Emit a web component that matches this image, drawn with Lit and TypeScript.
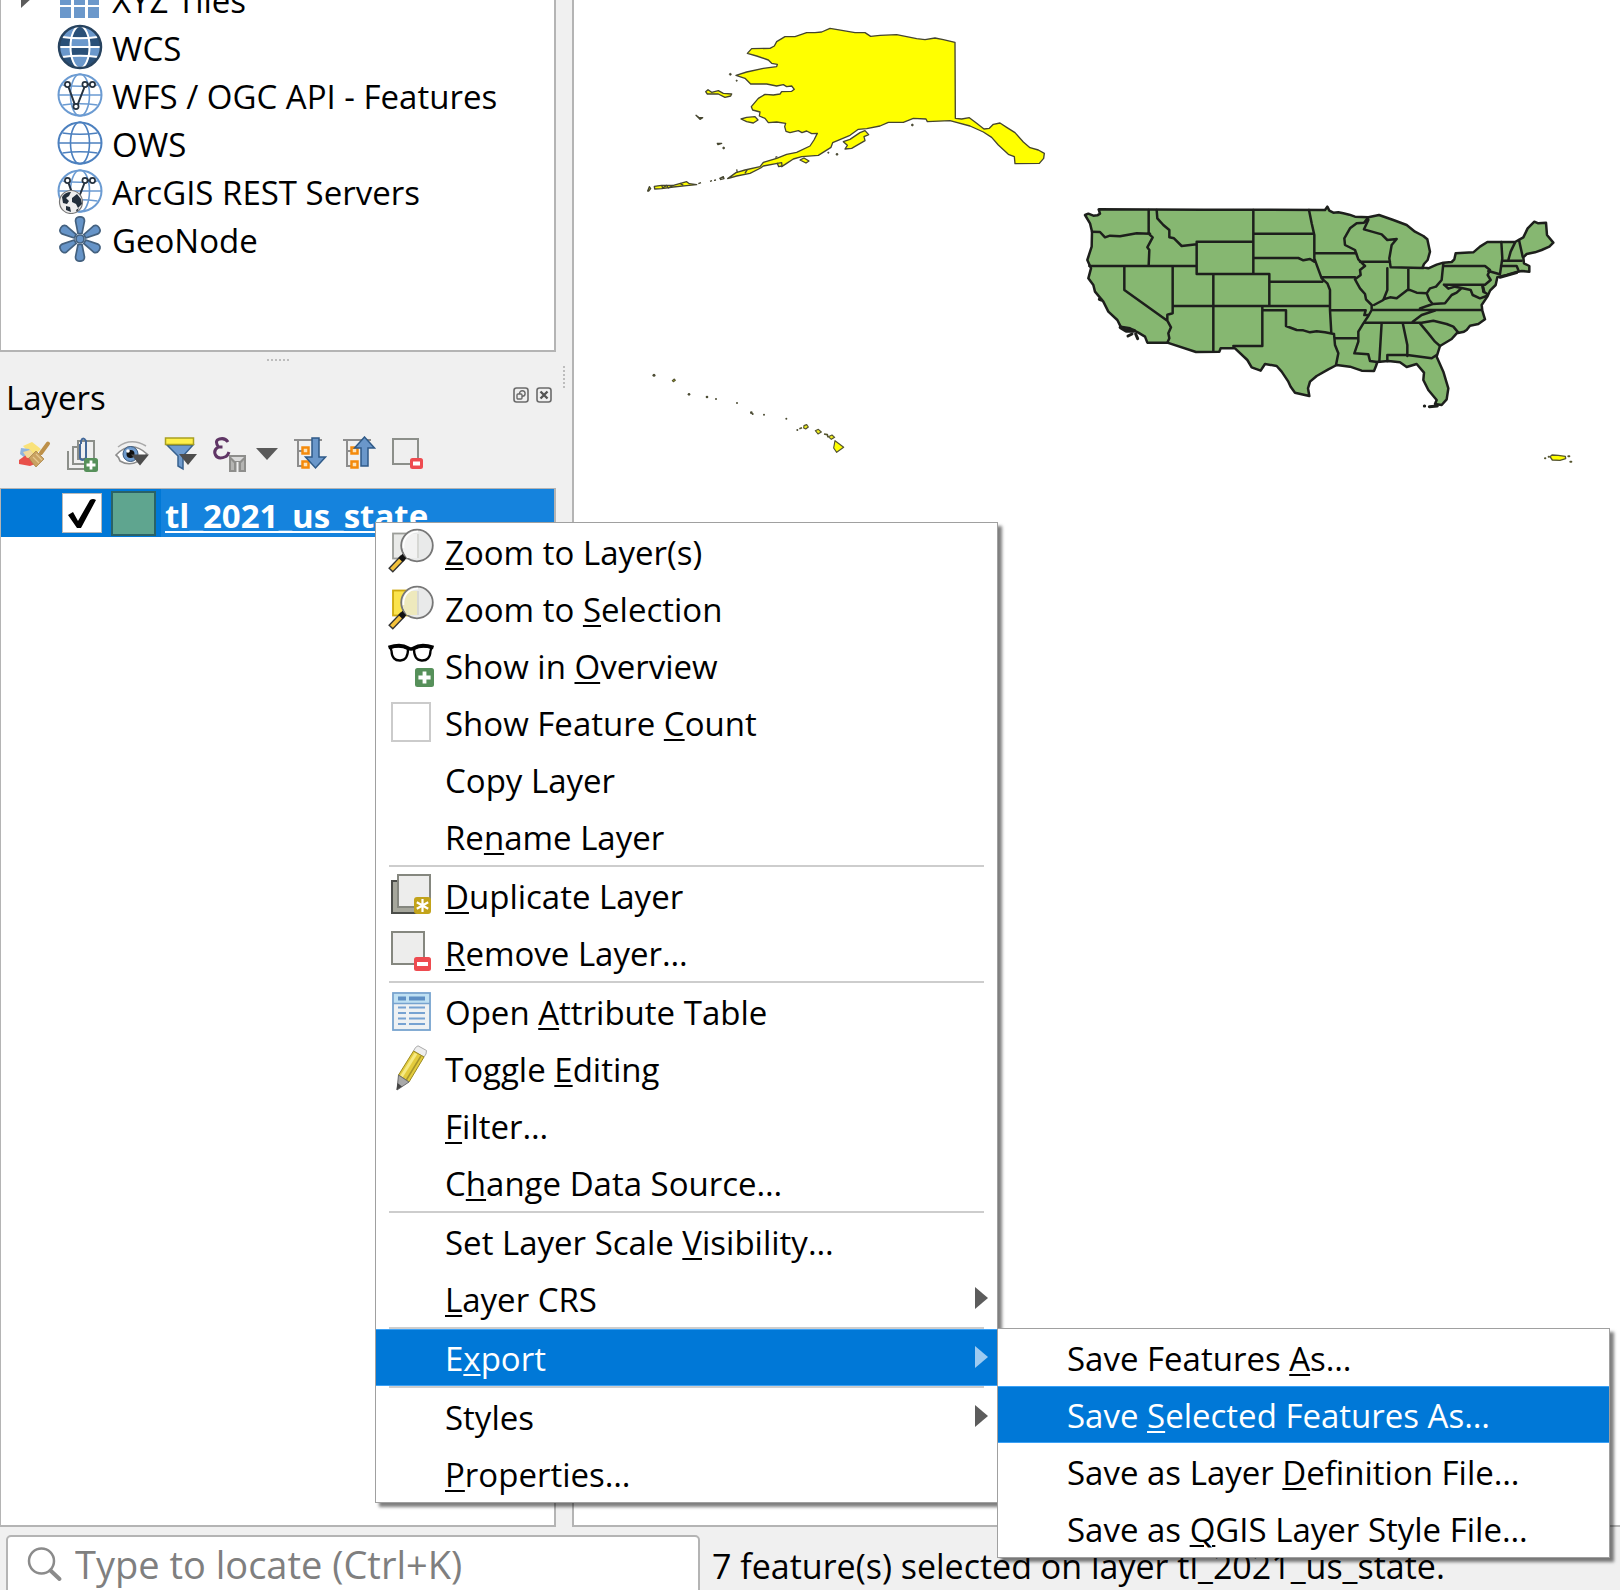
import { LitElement, html, svg, css, nothing } from "lit";
import { customElement, state } from "lit/decorators.js";

/* ---------- icons ---------- */

const globeLines = (stroke: string, w = 1.6) => svg`
  <g fill="none" stroke=${stroke} stroke-width=${w}>
    <ellipse cx="23" cy="23" rx="9.5" ry="21"/>
    <path d="M2 23H44M5.500 13Q23 15.500 40.500 13M5.500 33Q23 30.500 40.500 33"/>
  </g>`;

const nodeV = svg`
  <g fill="none" stroke="#26323f" stroke-width="2"><path d="M11.500 15L18 33M20.500 33L27.500 15M30 12.500H33"/></g>
  <g fill="#fff" stroke="#26323f" stroke-width="1.700">
    <circle cx="10.500" cy="12.500" r="2.600"/><circle cx="28" cy="12.500" r="2.600"/>
    <circle cx="35.500" cy="12.500" r="2.600"/><circle cx="19" cy="34.500" r="2.600"/>
  </g>`;

const xyzIcon = html`<svg class="tree-icon" viewBox="0 0 46 46" aria-hidden="true">
  <g fill="#6b98cb">${[3, 17, 31].map(x => [4, 18, 31].map(y => svg`<rect x=${x} y=${y} width="11" height="11"/>`))}</g></svg>`;

const wcsIcon = html`<svg class="tree-icon" viewBox="0 0 46 46" aria-hidden="true">
  <defs>
    <clipPath id="disc"><circle cx="23" cy="23" r="21"/></clipPath>
    <clipPath id="core"><ellipse cx="23" cy="23" rx="9.500" ry="21"/></clipPath>
  </defs>
  <g clip-path="url(#disc)">
    <rect width="46" height="46" fill="#6b98cb"/>
    <path fill="#2a5078" d="M0 14H46V23H0zM0 33H46V46H0z"/>
    <g clip-path="url(#core)"><rect width="46" height="46" fill="#6b98cb"/><path fill="#2a5078" d="M0 0H46V13H0zM0 24H46V32H0z"/></g>
  </g>
  ${globeLines("#fff", 2)}
  <circle cx="23" cy="23" r="21" fill="none" stroke="#27435f" stroke-width="2.500"/></svg>`;

const globe = (stroke: string, extra: unknown = nothing) => html`<svg class="tree-icon" viewBox="0 0 46 46" aria-hidden="true">
  <ellipse cx="23" cy="23" rx="21.500" ry="20.500" fill="#fff" stroke=${stroke} stroke-width="2"/>
  ${globeLines(stroke)}${extra}</svg>`;

const wfsIcon = globe("#6b9bd2", nodeV);
const owsIcon = globe("#4c80bf");
const arcIcon = globe("#6b9bd2", svg`${nodeV}
  <circle cx="14" cy="34" r="11.500" fill="#eee" stroke="#777" stroke-width="1.200"/>
  <path fill="#222e3b" d="M5 29Q8 24 14 24L12 28L9 30L12 33L10 36L6 35zM15 30L20 26L24 31L25 36L21 40L19 36L15 34zM9 38L13 39L14 44L9 42zM19 42L22 40L20 44z"/>`);

const geonodeIcon = html`<svg class="tree-icon" viewBox="0 0 46 46" aria-hidden="true">
  <g fill="#6694c8" stroke="#44617f" stroke-width="1.700">
    ${[0, 60, 120, 180, 240, 300].map(a => svg`<path transform=${`rotate(${a} 23 23)`} d="M21 17.500L18.500 5Q18.500 .8 23 .8T27.500 5L25 17.500z"/>`)}
    <circle cx="23" cy="23" r="4"/>
  </g></svg>`;

const tool = (body: unknown) => html`<svg class="tool-icon" viewBox="0 0 34 36" aria-hidden="true">${body}</svg>`;

const plusBadge = (x: number, y: number, s: number) => svg`
  <rect x=${x} y=${y} width=${s} height=${s} rx="2.500" fill="#56905a"/>
  <path stroke="#fff" stroke-width=${s / 5} d=${`M${x + s / 2} ${y + s * .18}V${y + s * .82}M${x + s * .18} ${y + s / 2}H${x + s * .82}`}/>`;
const minusBadge = (x: number, y: number, w: number, h: number) => svg`
  <rect x=${x} y=${y} width=${w} height=${h} rx="2.500" fill="#ee4b50"/>
  <rect x=${x + 3} y=${y + h / 2 - 2} width=${w - 6} height="4" fill="#fff"/>`;

const brushIcon = tool(svg`
  <path fill="#f9e27a" d="M6 10L15 6L24 13L16 21z"/><path fill="#8fb4de" d="M4 12L12 13L17 19L8 22L3 18z"/>
  <path fill="#e8504a" d="M2 24L9 19L18 28L13 30L2 28z"/>
  <path fill="#f2d89a" d="M6 16L13 14L18 20L10 22z"/>
  <path fill="#c9a262" stroke="#a98549" stroke-width=".8" d="M12 22L19 15L27 23L19 31Q15 27 12 22z"/>
  <path fill="none" stroke="#e6c88e" stroke-width="1.200" d="M16 21L22 27M19 18L25 24"/>
  <path stroke="#bd9049" stroke-width="4" stroke-linecap="round" d="M24 17L31 7.500"/>`);

const addGroupIcon = tool(svg`
  <g fill="#efefef" stroke="#8c8f8a" stroke-width="2">
    <path d="M2 15V33H18" fill="none"/><path d="M7 28V11H25V28z"/><path d="M12 23V5H28V23z"/>
  </g>
  <path fill="none" stroke="#44699a" stroke-width="2" d="M14 8V22Q16 26 20 22V5Q17 0 15 5V8"/>
  ${plusBadge(18, 22, 14)}`);

const eyeIcon = tool(svg`
  <path fill="#fff" stroke="#8d8d8d" stroke-width="1.600" d="M1 19Q16 3 32 18Q18 33 5 25Q4 21 1 19z"/>
  <path fill="none" stroke="#a9a9a9" stroke-width="1.500" d="M3 11Q16 1 31 10"/>
  <circle cx="15.500" cy="18" r="7.500" fill="#6f9bce" stroke="#3a5a7e"/><circle cx="15.500" cy="18" r="4" fill="#111"/>
  <circle cx="13" cy="15" r="1.800" fill="#fff"/>
  <path fill="#4d4d4d" d="M16 18.500H34L25 29.500z"/>`);

const filterIcon = tool(svg`
  <path fill="#6f9bce" stroke="#37618f" stroke-width="1.500" d="M3 9H29L19 20V33L14 30V20z"/>
  <rect x="1.500" y="2" width="28" height="6.500" fill="#fff04a" stroke="#a9a020" stroke-width="1.500"/>
  <path fill="#4d4d4d" d="M15 18H33L24 29z"/>`);

const exprIcon = tool(svg`
  <path fill="none" stroke="#5f3565" stroke-width="3" d="M15 6Q12 1.500 6.500 3T5.500 11H9.500H5.500Q0 14 2.500 19T13 20.500Q15 19 16 16"/>
  <path fill="#8e8e8c" d="M16 19H33V36H25.500V26H23.500V36H16z"/>
  <path fill="#d9d9d9" d="M18 21H31L27 25H22z"/><path fill="#b5b5b3" d="M18 24L21 27V34H18zM31 24L28 27V34H31z"/>`);

const tree = svg`<path fill="none" stroke="#8d8d8d" stroke-width="2" d="M1 4H29M5 4V30H12M5 15H12"/>
  <g fill="#fde3b8" stroke="#f58a0b" stroke-width="2.500"><rect x="9.500" y="11.500" width="6" height="6"/><rect x="9.500" y="25.500" width="6" height="6"/></g>`;
const expandIcon = tool(svg`${tree}<path fill="#6a97ca" stroke="#2f5a88" stroke-width="1.500" d="M19 2H26V21H32.500L22.500 32L12.500 21H19z"/>`);
const collapseIcon = tool(svg`${tree}<path fill="#6a97ca" stroke="#2f5a88" stroke-width="1.500" d="M19 30H26V12H32.500L22.500 1L12.500 12H19z"/>`);
const removeToolIcon = tool(svg`<rect x="2" y="3" width="25" height="25" fill="#efefef" stroke="#8c8f8a" stroke-width="2"/>${minusBadge(19, 22, 13, 11)}`);

const mi = (body: unknown) => html`<svg class="menu-icon" viewBox="0 0 46 46" aria-hidden="true">${body}</svg>`;

const zoomIcon = (fill: string, edge: string, tint: string) => mi(svg`
  <rect x="5" y="5.500" width="22" height="25" fill=${fill} stroke=${edge} stroke-width="1.800"/>
  <path stroke="#333" stroke-width="6.500" d="M2.500 42.500L15 29.500"/>
  <path stroke="#f4c23b" stroke-width="3.800" d="M3.500 41.500L13 31.500"/><path stroke="#111" stroke-width="6" d="M12.500 32L17 27.500"/>
  <circle cx="29" cy="17.500" r="15.800" fill="#e9eaea" stroke="#777" stroke-width="1.800"/>
  <path fill=${tint} d="M29 6V30H19Q10 17 20 6z"/><path stroke="#c4c5bf" d="M30 6V30"/>
  <path fill="none" stroke="#fff" stroke-width="1.500" d="M15.500 20Q15 5 30 3.500"/>`);
const zoomLayerIcon = zoomIcon("#e9eae8", "#9c9e99", "#f2f2f2");
const zoomSelIcon = zoomIcon("#fbe34d", "#cfa90e", "#eee9bd");

const overviewIcon = mi(svg`
  <g fill="#fff" stroke="#000" stroke-width="2.300">
    <path d="M2.500 6Q12 3 20 7Q20 18 12.500 18.500Q4 19 3.500 9z"/><path d="M43.500 6Q34 3 26 7Q26 18 33.500 18.500Q42 19 42.500 9z"/>
  </g>
  <path fill="none" stroke="#000" stroke-width="3.500" d="M.5 5.500Q13 1.500 20 6Q23 8 26 6Q33 1.500 45.500 5.500"/>
  ${plusBadge(27, 26, 19)}`);

const duplicateIcon = mi(svg`
  <rect x="4" y="9" width="31" height="32" fill="#a6a79c" stroke="#4b4d49" stroke-width="2"/>
  <rect x="10" y="3" width="32" height="32" fill="#ededec" stroke="#85877f" stroke-width="2"/>
  <rect x="26" y="25" width="17" height="17" rx="3" fill="#c2a31a"/>
  <path stroke="#fff" stroke-width="2.200" d="M34.500 27V40M28.800 30.200L40.200 36.800M28.800 36.800L40.200 30.200"/>`);

const removeIcon = mi(svg`<rect x="4" y="3" width="32" height="32" fill="#ededec" stroke="#85877f" stroke-width="2"/>${minusBadge(26, 28, 17, 14)}`);

const tableIcon = mi(svg`
  <rect x="5" y="5" width="37" height="37" fill="#eef1f3" stroke="#77a3cf" stroke-width="1.800"/>
  <rect x="6" y="6" width="35" height="9.500" fill="#bfe0f3"/>
  <path stroke="#77a3cf" stroke-width="1.500" d="M5 15.500H42"/>
  <path stroke="#5f8fc4" stroke-width="4" d="M10 10.500H18M21 10.500H37"/>
  <path stroke="#76a2d2" stroke-width="2" d="M10 19.500H18M21 19.500H37M10 25H18M21 25H37M10 30.500H18M21 30.500H37M10 36H18M21 36H37"/>`);

const pencilIcon = mi(svg`
  <path fill="#eee" stroke="#aaa" d="M27.500 2.500L30 .8L38.500 5.500L38 9L36 12L25.500 6z"/>
  <path fill="#e3cb3d" stroke="#9c8a1f" d="M25.500 6L36 12L21 37L10.500 30z"/>
  <path stroke="#f6ea83" stroke-width="3" d="M28 8.500L13.500 31.500"/><path stroke="#a8962a" stroke-width="1.500" d="M33 11L18 35.500"/>
  <path fill="#a9a9a9" stroke="#6b6b6b" d="M10.500 30L21 37L9 45z"/><path fill="#444" d="M9.500 38L14 41.500L8.500 45z"/>`);

const arrow = html`<svg class="arrow" viewBox="0 0 13 22" aria-hidden="true"><path d="M0 0L13 11L0 22z"/></svg>`;

/* ---------- map geometry ---------- */

const alaska = svg`<g transform="translate(630 10) scale(.33333)" fill="#ff0" stroke="#45452f" stroke-width="4" stroke-linejoin="round">
  <path d="M600 55L618 58L640 62L675 68L705 68L722 79L750 76L800 74L860 86L885 89L915 84L940 89L975 97L976 325L995 327L1018 323L1040 340L1062 357L1078 355L1090 343L1110 339L1130 352L1155 368L1180 396L1200 413L1225 420L1243 430L1241 445L1228 460L1155 461L1153 440L1135 433L1105 405L1085 382L1060 366L1020 348L960 332L892 335L888 327L850 325L820 337L775 337L750 348L710 356L685 358L660 376L608 398L603 412L565 436L515 440L490 447L470 460L455 470L442 460L400 468L392 474L360 490L320 498L293 506L318 488L345 480L390 470L400 457L440 445L470 433L500 427L540 408L552 390L562 370L545 371L530 363L516 368L505 362L480 368L468 364L464 350L467 340L440 336L415 338L405 325L388 318L390 306L368 300L364 290L385 265L405 253L430 255L450 252L455 245L485 244L493 238L485 228L470 230L460 224L440 228L410 222L362 222L345 205L318 196L350 186L400 175L440 170L442 163L425 160L415 150L380 138L352 130L365 116L420 115L433 108L440 95L465 80L495 80L530 68L555 68L575 66z"/>
  <path d="M640 395L660 388L690 368L705 362L716 374L702 380L705 392L665 415L645 417L652 406z"/>
  <path d="M333 327L350 322L375 320L384 330L370 339L350 335z"/>
  <path d="M227 245L234 239L245 247L265 242L280 250L305 252L302 258L285 262L265 252L245 252L232 252z"/>
  <path d="M510 450L522 444L537 453L528 459z"/><path d="M442 460L455 458L456 468L446 470z"/>
  <path d="M198 316L206 322L218 323L210 328zM262 400L275 400L264 404z"/>
  <path d="M53 543L58 530L62 536L56 543zM73 529L95 526L130 526L170 515L178 521L200 524L170 527L130 531L95 536L74 537z"/>
  <path fill="none" d="M95 526L98 534L110 526L115 534L130 526M150 520L160 526M240 514L246 512M252 511L258 510M268 506L280 500L282 506L270 509M205 521L213 518M320 478L322 488M345 490L352 478M436 442L442 440"/>
  <g fill="#45452f" stroke-width="2"><circle cx="301" cy="193" r="3"/><circle cx="320" cy="212" r="2"/><circle cx="281" cy="414" r="3"/><circle cx="595" cy="428" r="2"/><circle cx="621" cy="433" r="3"/><circle cx="847" cy="345" r="3"/></g>
</g>`;

const hawaii = svg`<g transform="translate(630 360) scale(.33333)" fill="#f1ef1f" stroke="#55552f" stroke-width="3.500" stroke-linejoin="round">
  <path fill="#ff0" d="M615 242L641 262L620 277L611 264z"/>
  <path d="M595 230L606 225L614 232L604 238zM556 212L565 208L574 216L564 222zM522 197L530 194L535 201L527 207L521 204z"/>
  <path fill="none" stroke-width="5" d="M582 222L592 224L594 232M508 206L516 203"/>
  <g stroke="none" fill="#4c4c34"><circle cx="72" cy="46" r="4.500"/><circle cx="177" cy="103" r="4"/><circle cx="231" cy="111" r="4"/><circle cx="258" cy="117" r="3"/><circle cx="321" cy="129" r="3"/><circle cx="364" cy="158" r="4"/><circle cx="368" cy="162" r="3"/><circle cx="402" cy="164" r="3"/><circle cx="469" cy="176" r="3"/><circle cx="502" cy="210" r="3"/></g>
  <path d="M127 62L133 57L136 61L130 65z"/>
</g>`;

const lower48 = svg`<g transform="translate(1070 190) scale(.33333)" fill="none" stroke="#1d1f1c" stroke-width="7.500" stroke-linejoin="round" stroke-linecap="round">
  <path fill="#86b771" d="M45 75L55 71L70 77L82 76L90 71L86 58L400 59L765 60L772 50L778 62L790 68L805 67L820 70L838 74L855 80L895 82L927 75L970 90L1010 105L1035 125L1060 138L1072 148L1080 185L1073 210L1062 222L1058 232L1075 235L1100 224L1120 218L1145 216L1153 208L1157 190L1210 187L1230 170L1252 156L1335 156L1360 142L1373 115L1393 95L1405 100L1428 98L1431 135L1450 158L1438 170L1415 180L1395 187L1370 192L1360 202L1362 220L1378 228L1378 245L1355 243L1340 246L1310 255L1282 262L1277 285L1260 302L1252 320L1235 345L1237 362L1245 388L1225 402L1200 407L1190 420L1182 425L1160 430L1145 447L1110 468L1100 500L1120 545L1135 595L1130 628L1115 645L1095 642L1100 630L1075 600L1060 570L1062 548L1040 522L1010 531L990 517L955 513L922 516L918 528L912 543L875 542L840 530L800 525L775 538L740 558L720 575L714 595L718 618L675 608L662 590L655 575L635 545L620 528L585 522L572 542L545 532L532 510L495 475L452 475L448 485L378 486L292 458L232 458L225 440L205 428L180 415L152 410L142 390L115 365L100 335L75 305L70 285L55 265L63 235L52 210L65 170L66 125L60 100z"/>
  <path d="M66 125L90 126L105 142L120 137L150 139L200 130L240 131M236 60V131L248 142L232 172L238 180L236 226M58 228H380M260 60L262 85L280 105L298 120L298 142L312 145L335 168L380 163M380 155H550M550 60V250M380 155V252H598M430 252V485M163 228V300L292 392M308 228V370L292 374L292 392L303 412L295 430L298 445L292 458M308 348H780M598 252V348M598 275H757M553 131H730M553 204H685L700 211L720 207L733 215M717 60L725 100L733 135L733 205L742 230L755 265L772 280L780 300L780 360L784 430M577 350V468H490M577 361H648V408L680 420L700 421L720 427L740 424L765 427L792 432M792 432L795 465L805 490L798 525M733 190H858M757 262H855M782 361H887L883 375H895M795 445H862"/>
  <path d="M152 412L168 422L192 422" stroke-width="12"/><path d="M174 438L186 432M197 432L203 446" stroke-width="9"/><path d="M88 328L94 330" stroke-width="9"/>
  <g transform="translate(690 0)">
    <path d="M205 82L192 98L170 100L150 115L133 145L135 165L165 180L175 208L195 228L180 240L182 255L165 268L180 295L195 312L198 328L215 345L215 360L205 378L190 400L175 425L175 455L163 490L205 493L210 513L232 516M180 215H270M205 90L192 118L245 133L262 150L290 147L275 165L268 205L272 232L370 234M262 235V300L250 330L222 345M325 237V300M250 328L270 322L290 325L325 298L350 308L380 310L390 295L408 290L425 270L430 220M380 310L388 330L398 342L360 355M398 342L435 340L455 315L470 308L485 294L465 290L445 296L432 284M432 284H555L572 270L563 255L570 240L555 228H430M565 243L597 252M604 156L607 205L600 252M645 158L632 185L625 210M657 150L668 200M606 212H665M603 228H650L655 240M485 294L512 300L518 315L540 325L560 318M548 286L550 305L562 312M215 360H545M338 395L365 375L405 362M360 355L390 345M192 398H365L400 392L440 402L460 410L475 428M360 400L385 430L405 455L420 468M245 398L238 515M308 398L322 465L322 498M262 513V495H322L395 505L410 495"/>
    <path stroke-width="9" d="M600 262L650 248M388 650L412 648M373 648h1M548 288L552 305"/>
  </g>
</g>`;

const puertoRico = svg`<g transform="translate(1300 190) scale(.33333)" fill="#ff0" stroke="#55552f" stroke-width="4" stroke-linejoin="round">
  <path d="M750 800L756 795L775 796L796 799L797 806L780 811L757 810z"/>
  <path fill="none" stroke-width="6" stroke-linecap="round" d="M746 800h1M805 799h3M735 805h1M811 815h3"/></g>`;

/* ---------- data ---------- */

interface Entry { label: string; key?: number; icon?: unknown; kind?: "sep" | "check" | "sub" }
const sep: Entry = { label: "", kind: "sep" };

const menuEntries: Entry[] = [
  { label: "Zoom to Layer(s)", key: 0, icon: zoomLayerIcon },
  { label: "Zoom to Selection", key: 8, icon: zoomSelIcon },
  { label: "Show in Overview", key: 8, icon: overviewIcon },
  { label: "Show Feature Count", key: 13, kind: "check" },
  { label: "Copy Layer" },
  { label: "Rename Layer", key: 2 },
  sep,
  { label: "Duplicate Layer", key: 0, icon: duplicateIcon },
  { label: "Remove Layer…", key: 0, icon: removeIcon },
  sep,
  { label: "Open Attribute Table", key: 5, icon: tableIcon },
  { label: "Toggle Editing", key: 7, icon: pencilIcon },
  { label: "Filter…", key: 0 },
  { label: "Change Data Source…", key: 1 },
  sep,
  { label: "Set Layer Scale Visibility…", key: 16 },
  { label: "Layer CRS", key: 0, kind: "sub" },
  sep,
  { label: "Export", key: 1, kind: "sub" },
  sep,
  { label: "Styles", kind: "sub" },
  { label: "Properties…", key: 0 },
];

const exportEntries: Entry[] = [
  { label: "Save Features As…", key: 14 },
  { label: "Save Selected Features As…", key: 5 },
  { label: "Save as Layer Definition File…", key: 14 },
  { label: "Save as QGIS Layer Style File…", key: 8 },
];

const sources = [
  { label: "WCS", icon: wcsIcon },
  { label: "WFS / OGC API - Features", icon: wfsIcon },
  { label: "OWS", icon: owsIcon },
  { label: "ArcGIS REST Servers", icon: arcIcon },
  { label: "GeoNode", icon: geonodeIcon },
];

const accel = (e: Entry) => e.key === undefined
  ? e.label
  : html`${e.label.slice(0, e.key)}<u>${e.label[e.key]}</u>${e.label.slice(e.key + 1)}`;

/* ---------- context menu ---------- */

@customElement("layer-menu")
class LayerMenu extends LitElement {
  @state() private open = "Export";
  @state() private active = "Save Selected Features As…";

  static styles = css`
    :host { display: block; font: 33px/40px "Open Sans", "Noto Sans", sans-serif; color: #000; }
    .menu {
      box-sizing: border-box; width: 623px; margin: 0; padding: 0; list-style: none;
      background: #fff; border: 1px solid #a0a0a0; box-shadow: 4px 4px 3px rgba(0, 0, 0, .5);
    }
    .row { position: relative; }
    .item {
      box-sizing: border-box; display: grid; grid-template-columns: 46px 1fr 13px; column-gap: 11px; align-items: center;
      width: 100%; height: 57px; padding: 0 9px 2px 12px; border: 0; background: none;
      font: inherit; color: inherit; text-align: left; white-space: pre;
    }
    .text { grid-column: 2; padding-top: 4px; }
    .hot { background: #0078d7; color: #fff; box-shadow: inset 0 1px #3aa0f5, inset 0 -1px #3aa0f5; }
    u { text-decoration-thickness: 2px; text-underline-offset: 3px; }
    .menu-icon { display: block; width: 46px; height: 46px; }
    .arrow { display: block; width: 13px; height: 22px; fill: #5c5c5c; }
    .hot .arrow { fill: #9ecbf1; }
    .sep { height: 2px; margin: 0 13px; background: #cdcdcd; }
    .tick {
      appearance: none; box-sizing: border-box; width: 40px; height: 40px; margin: 0 3px;
      border: 2px solid #cbcbcb; background: #fff;
    }
    .submenu { position: absolute; left: 100%; top: -1px; width: 613px; }
    .submenu .item { grid-template-columns: 46px 1fr; }
  `;

  private renderItem(e: Entry) {
    if (e.kind === "sep") return html`<li class="sep" role="separator"></li>`;
    if (e.kind === "check") {
      return html`<li class="row"><label class="item"><input class="tick" type="checkbox"><span class="text">${accel(e)}</span></label></li>`;
    }
    const sub = e.kind === "sub";
    const isOpen = sub && this.open === e.label;
    return html`<li class="row">
      <button class="item ${isOpen ? "hot" : ""}" type="button" @click=${() => { this.open = sub ? e.label : ""; }}>
        ${e.icon ?? nothing}<span class="text">${accel(e)}</span>${sub ? arrow : nothing}
      </button>
      ${isOpen && e.label === "Export" ? html`<ul class="menu submenu">
        ${exportEntries.map(x => html`<li><button type="button" class="item ${this.active === x.label ? "hot" : ""}"
          @mouseenter=${() => { this.active = x.label; }}><span class="text">${accel(x)}</span></button></li>`)}
      </ul>` : nothing}
    </li>`;
  }

  render() {
    return html`<ul class="menu">${menuEntries.map(e => this.renderItem(e))}</ul>`;
  }
}

/* ---------- application ---------- */

@customElement("app-root")
class AppRoot extends LitElement {
  @state() private shown = true;

  static styles = css`
    :host {
      display: grid; grid-template: minmax(0, 1fr) 63px / 556px 16px minmax(0, 1fr);
      position: relative; height: 100vh; overflow: hidden; background: #f0f0f0; color: #000;
      font: 33px/40px "Open Sans", "Noto Sans", sans-serif;
    }
    button { padding: 0; border: 0; background: none; font: inherit; color: inherit; }
    svg { display: block; }

    .side { display: flex; flex-direction: column; min-height: 0; }
    .browser {
      box-sizing: border-box; flex: none; height: 352px; overflow: hidden;
      background: #fff; border: solid #b4b4b4; border-width: 0 2px 2px 1px;
    }
    .sources { margin: -25px 0 0; padding: 0; list-style: none; }
    .source { display: grid; grid-template-columns: 36px 46px 1fr; align-items: center; height: 48px; padding-left: 20px; }
    .name { grid-column: 3; padding: 3px 0 0 9px; white-space: pre; }
    .tree-icon { grid-column: 2; width: 46px; height: 46px; }
    .expander { grid-column: 1; width: 12px; height: 22px; fill: #5c5c5c; }

    .grip { display: flex; gap: 2px; }
    .grip i { width: 2px; height: 2px; background: #bdbdbd; }
    .across { flex: none; height: 16px; align-items: center; justify-content: center; }
    .gutter { flex-direction: column; align-items: center; padding-top: 366px; }

    .title { display: flex; align-items: center; height: 56px; padding: 0 4px 2px 6px; box-sizing: border-box; gap: 7px; }
    .title h2 { flex: 1; margin: 0; padding-top: 6px; font: inherit; }
    .dock { width: 16px; height: 16px; }

    .tools { display: flex; align-items: center; gap: 15px; height: 60px; padding: 0 17px 4px; }
    .tool-icon { width: 34px; height: 36px; }
    .pair { display: flex; align-items: center; gap: 9px; }
    .caret { width: 22px; height: 12px; fill: #5a5a5a; }

    .layers { box-sizing: border-box; flex: 1; min-height: 0; background: #fff; border: solid #b4b4b4; border-width: 1px 2px 2px 1px; }
    .layer {
      display: flex; align-items: center; height: 48px; padding-left: 61px; gap: 9px; color: #fff;
      font-weight: 700; background: linear-gradient(90deg, #0078d7 160px, #1583dd 160px);
    }
    .box { display: grid; width: 40px; height: 40px; }
    .box > * { grid-area: 1 / 1; }
    .box input { appearance: none; box-sizing: border-box; width: 40px; height: 40px; margin: 0; background: #fff; border: 1px solid #b9b9b9; }
    .tickmark { width: 40px; height: 40px; pointer-events: none; }
    .swatch { box-sizing: border-box; width: 45px; height: 45px; background: #5fa58f; border: 2px solid #2a6266; }
    .layer .label { text-decoration: underline 2px; text-underline-offset: 3px; padding-top: 5px; }

    .map { box-sizing: border-box; min-width: 0; overflow: hidden; background: #fff; border: solid #b4b4b4; border-width: 0 0 2px 2px; }
    .map svg { width: 100%; height: auto; }

    .status { grid-column: 1 / -1; display: flex; align-items: flex-start; min-width: 0; padding-left: 6px; }
    .locate {
      box-sizing: border-box; display: flex; align-items: center; gap: 12px; flex: none; width: 694px; height: 66px; margin-top: 8px;
      padding: 0 19px 8px; background: #fff; border: 2px solid #b4b4b4; border-radius: 5px;
    }
    .locate svg { width: 36px; height: 36px; flex: none; }
    .locate input { flex: 1; min-width: 0; height: 52px; padding: 0; border: 0; outline: 0; background: none; font: inherit; font-size: 38px; }
    .locate input::placeholder { color: #7f7f7f; opacity: 1; }
    .message { margin: 0; padding: 19px 0 0 12px; font-size: 34px; white-space: nowrap; }

    .context { position: absolute; left: 375px; top: 522px; }
  `;

  private grip(cls: string) {
    return html`<div class="grip ${cls}" aria-hidden="true">${[0, 1, 2, 3, 4, 5].map(() => html`<i></i>`)}</div>`;
  }

  render() {
    return html`
      <aside class="side">
        <div class="browser">
          <ul class="sources">
            <li class="source"><svg class="expander" viewBox="0 0 12 22"><path d="M0 0L12 9L0 20z"/></svg>${xyzIcon}<span class="name">XYZ Tiles</span></li>
            ${sources.map(s => html`<li class="source">${s.icon}<span class="name">${s.label}</span></li>`)}
          </ul>
        </div>
        ${this.grip("across")}
        <header class="title">
          <h2>Layers</h2>
          <button type="button" aria-label="Float panel"><svg class="dock" viewBox="0 0 16 16"><rect x="1" y="1" width="14" height="14" rx="2.500" fill="none" stroke="#6b6b6b" stroke-width="1.600"/><g fill="none" stroke="#6b6b6b" stroke-width="1.400"><circle cx="9.300" cy="6.500" r="2.800"/><rect x="4" y="7" width="5" height="5" rx="1" fill="#f0f0f0"/></g></svg></button>
          <button type="button" aria-label="Close panel"><svg class="dock" viewBox="0 0 16 16"><rect x="1" y="1" width="14" height="14" rx="2.500" fill="none" stroke="#6b6b6b" stroke-width="1.600"/><path stroke="#555" stroke-width="2.400" d="M4.500 4.500L11.500 11.500M11.500 4.500L4.500 11.500"/></svg></button>
        </header>
        <div class="tools">
          <button type="button" aria-label="Open layer styling">${brushIcon}</button>
          <button type="button" aria-label="Add group">${addGroupIcon}</button>
          <button type="button" aria-label="Manage map themes">${eyeIcon}</button>
          <button type="button" aria-label="Filter legend">${filterIcon}</button>
          <div class="pair">
            <button type="button" aria-label="Filter by expression">${exprIcon}</button>
            <button type="button" aria-label="Expression options"><svg class="caret" viewBox="0 0 22 12"><path d="M0 0H22L11 12z"/></svg></button>
          </div>
          <button type="button" aria-label="Expand all">${expandIcon}</button>
          <button type="button" aria-label="Collapse all">${collapseIcon}</button>
          <button type="button" aria-label="Remove layer">${removeToolIcon}</button>
        </div>
        <div class="layers">
          <div class="layer">
            <span class="box">
              <input id="vis" type="checkbox" .checked=${this.shown} @change=${() => { this.shown = !this.shown; }}>
              ${this.shown ? html`<svg class="tickmark" viewBox="0 0 40 40"><path fill="#000" d="M6 22L11 19L16 28L28 7Q31 5 34 7L19 35H15z"/></svg>` : nothing}
            </span>
            <span class="swatch"></span>
            <label class="label" for="vis">tl_2021_us_state</label>
          </div>
        </div>
      </aside>
      ${this.grip("gutter")}
      <main class="map">
        <svg viewBox="574 0 1046 1525" role="img" aria-label="Map of the United States">
          ${alaska}${hawaii}${lower48}${puertoRico}
        </svg>
      </main>
      <footer class="status">
        <label class="locate">
          <svg viewBox="0 0 36 36" aria-hidden="true"><circle cx="14.500" cy="15" r="12.500" fill="none" stroke="#8b8b8b" stroke-width="2.500"/><path stroke="#8b8b8b" stroke-width="4" stroke-linecap="round" d="M23.500 24.500L32.500 33"/></svg>
          <input type="text" aria-label="Locator" placeholder="Type to locate (Ctrl+K)">
        </label>
        <p class="message">7 feature(s) selected on layer tl_2021_us_state.</p>
      </footer>
      <layer-menu class="context"></layer-menu>
    `;
  }
}
